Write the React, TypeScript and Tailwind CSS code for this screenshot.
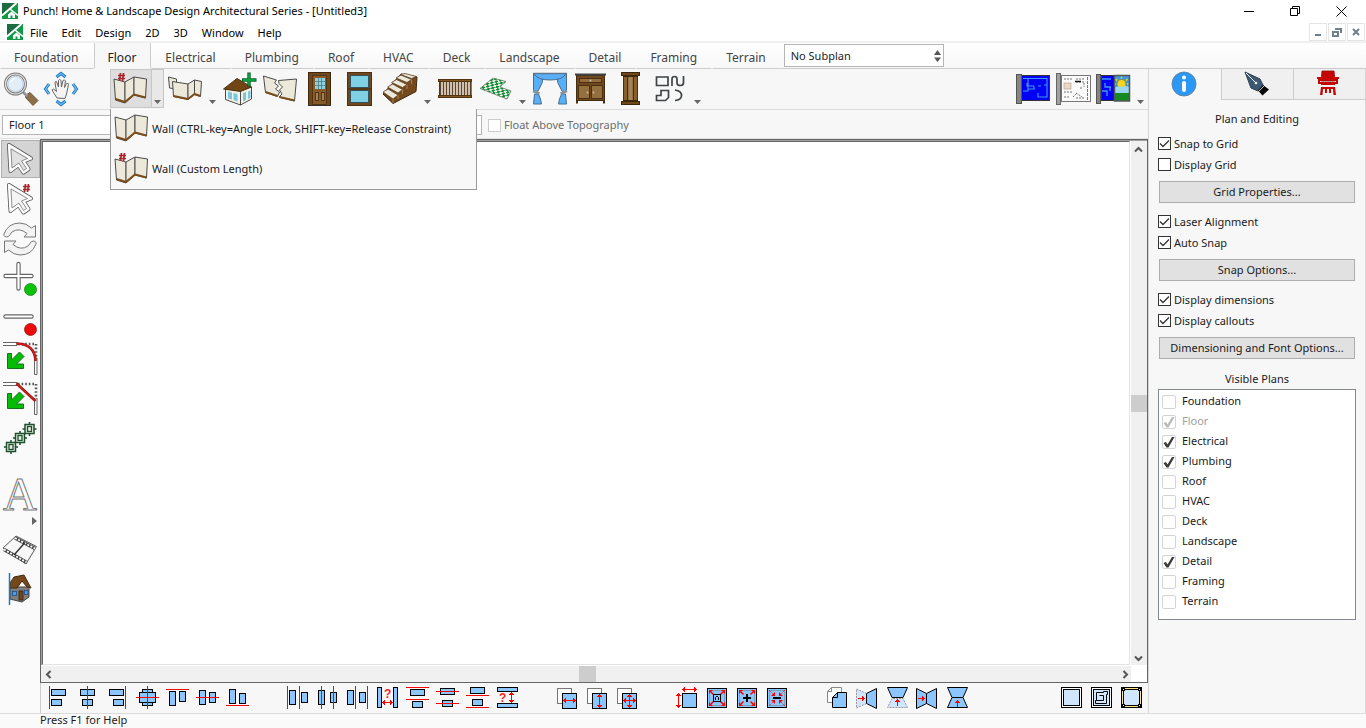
import React, { useState } from "react";
import clsx from "clsx";

const TABS = [
  "Foundation",
  "Floor",
  "Electrical",
  "Plumbing",
  "Roof",
  "HVAC",
  "Deck",
  "Landscape",
  "Detail",
  "Framing",
  "Terrain",
];

const MENUS = ["File", "Edit", "Design", "2D", "3D", "Window", "Help"];

const CREAM = "#ece9da";
const INK = "#4a4a4a";
const WOOD = "#7a4d1c";
const BLUE = "#8cc6ff";

/* ---------- small drawing helpers ---------- */

const Svg = ({ size = 40, children }: { size?: number; children: React.ReactNode }) => (
  <svg width={size} height={size} viewBox={`0 0 ${size} ${size}`} aria-hidden="true" className="block shrink-0 overflow-visible">
    {children}
  </svg>
);

const Logo = () => (
  <svg width="16" height="16" viewBox="0 0 16 16" aria-hidden="true" className="block shrink-0">
    <rect width="16" height="16" fill="#0f9a48" />
    <path d="M0 0H14L0 11Z" fill="#1d6b40" />
    <path d="M0 12.500L14.500 0" stroke="#fff" strokeWidth="2" />
    <path d="M8 6L16 12.500" stroke="#fff" strokeWidth="1.600" />
    <path d="M6 15V11.500L9.500 8.500L13 11.500V15H10.500V12.500H8.500V15Z" fill="#fff" />
  </svg>
);

const Hash = ({ x, y }: { x: number; y: number }) => (
  <path
    d={`M${x + 2.5} ${y}L${x + 1.5} ${y + 8}M${x + 5.5} ${y}L${x + 4.5} ${y + 8}M${x} ${y + 2.5}H${x + 7}M${x} ${y + 5.5}H${x + 7}`}
    stroke="#a8262b"
    strokeWidth="1.700"
    fill="none"
  />
);

const WallShape = () => (
  <g stroke={INK} strokeWidth="1" strokeLinejoin="round">
    <path d="M4 10L15 13V34L5.500 31Z" fill={CREAM} />
    <path d="M15 13L24 8V26L15 34Z" fill={CREAM} />
    <path d="M24 8L36.500 10L35.500 29L24 26Z" fill={CREAM} />
    <path d="M5.500 30L15 33L24 25.500L35.500 28.500" stroke={WOOD} strokeWidth="2" fill="none" />
  </g>
);

const WallIcon = ({ hash = false }: { hash?: boolean }) => (
  <Svg>
    <g transform={hash ? undefined : "translate(0 -2)"}>
      <WallShape />
    </g>
    {hash && <Hash x={8} y={4} />}
  </Svg>
);

/* ---------- top toolbar icons ---------- */

const ZoomIcon = () => (
  <Svg>
    <path d="M25 26L29 23.500L37 31.500L32 36.500L24.500 28.500Z" fill="#8d6f4c" stroke="#6b5235" />
    <path d="M22 23L26 27" stroke="#999" strokeWidth="3" />
    <circle cx="14.500" cy="15" r="10" fill="#f0f6fb" stroke="#777" strokeWidth="3" />
    <circle cx="14.500" cy="15" r="10" fill="none" stroke="#e4e4e4" strokeWidth="1.200" />
    <circle cx="14.500" cy="15" r="7.500" fill="#e2eff8" stroke="#a9c9df" strokeWidth=".8" />
    <path d="M9 14Q10 9 15 9Q11 12 9 14Z" fill="#fff" />
  </Svg>
);

const PanIcon = () => (
  <Svg>
    <path d="M15.500 8L20 4.500L24.500 8M15.500 32L20 35.500L24.500 32M8 15L4.500 20L8 25M32 15L35.500 20L32 25" stroke="#1c6fb8" strokeWidth="3" fill="none" />
    <path d="M15.500 8L20 4.500L24.500 8M15.500 32L20 35.500L24.500 32M8 15L4.500 20L8 25M32 15L35.500 20L32 25" stroke="#61b8f4" strokeWidth="1.400" fill="none" />
    <path
      d="M16 29L11.500 22Q10.500 20 12.500 20L15.500 22.500L14 14Q14 12 15.500 12.500L17.500 18L17.500 11.500Q18.500 9.500 20 11.500L20.500 18L22 11.500Q23.500 10 24.500 12L23.500 18.500L25.500 14.500Q27.500 13.500 27.500 15.500L25.500 25L24 29.500Z"
      fill="#f4f4f4"
      stroke="#666"
    />
  </Svg>
);

const WallStripIcon = () => (
  <Svg>
    <g stroke={INK} strokeLinejoin="round" fill={CREAM}>
      <path d="M3.500 8L11.500 10V20L4.500 19Z" />
      <path d="M7.500 12.500L23 15V30.500L8.500 27.500Z" />
      <path d="M23 15L29.500 11V25.500L23 30.500Z" />
      <path d="M29.500 11L36.500 12.500L35.500 27.500L29.500 25.500Z" />
      <path d="M8.500 27L23 30L29.500 25L35.500 27" stroke={WOOD} strokeWidth="2" fill="none" />
    </g>
  </Svg>
);

const AddHouseIcon = () => (
  <Svg>
    <path d="M5.500 20V30.500L20.500 36L31.500 30V18L20 21Z" fill="#f3f1e2" stroke={INK} />
    <path d="M20.500 22V36" stroke={INK} />
    <path d="M8 22.500L12 23.500V30.500L8 29.500ZM13.500 24L17.500 25V32.500L13.500 31ZM23 24L26 23V31L23 32.500ZM28 22.500L30.500 21.500V29L28 30Z" fill="#77c7e4" />
    <path d="M3.500 20L17 9.500L31.500 18L20.500 22.500Z" fill="#714514" stroke="#4b3115" />
    <path d="M29 3.500V17.500M22 11H36.500" stroke="#0b5d2b" strokeWidth="3.400" />
    <path d="M29 4.500V16.500M23 11H35.500" stroke="#0ca03f" strokeWidth="1.800" />
  </Svg>
);

const BreakWallIcon = () => (
  <Svg>
    <g fill={CREAM} stroke={INK} strokeLinejoin="round">
      <path d="M3.500 7L16.500 11L14.500 14L18.500 17L15.500 20L19.500 23L17.500 27.500L5.500 23.500Z" />
      <path d="M18.500 11.500L36.500 10L34.500 32L19 28L22 25L19.500 21L22.500 18L19 14.500Z" />
    </g>
    <path d="M5.500 23L17.500 27M19.500 28L34.500 31.500" stroke={WOOD} strokeWidth="2" />
  </Svg>
);

const DoorIcon = () => (
  <Svg>
    <rect x="8.500" y="3.500" width="22" height="33" fill="#70461b" stroke="#3f270c" />
    <rect x="12.500" y="6.500" width="14" height="29" fill="#875a2a" stroke="#543411" />
    <rect x="15" y="9" width="10" height="11" fill="#8bd3e2" />
    <path d="M18.500 9V20M21.500 9V20M15 12.500H25M15 16.500H25" stroke="#4c6e73" strokeWidth=".7" />
    <rect x="15.500" y="23.500" width="3" height="8" fill="#a98356" stroke="#533614" />
    <rect x="21.500" y="23.500" width="3" height="8" fill="#a98356" stroke="#533614" />
    <path d="M8 36.500H31" stroke="#333" />
  </Svg>
);

const WindowIcon = () => (
  <Svg>
    <rect x="7.500" y="3.500" width="24" height="33" fill="#70461b" stroke="#4f310d" />
    <rect x="10.500" y="6.500" width="18" height="12" fill="#80d0e5" stroke="#31545d" />
    <rect x="10.500" y="21.500" width="18" height="12" fill="#80d0e5" stroke="#31545d" />
    <path d="M8 20H31" stroke="#3f260a" />
  </Svg>
);

const StairsIcon = () => (
  <Svg>
    <path d="M3 25L13 34.500L36 22.500L37 8L21 5Z" fill="#75491b" stroke="#3d2812" />
    <g fill={CREAM} stroke="#594126" strokeWidth=".8">
      <path d="M3 23L8 20L18 26L13 30Z" />
      <path d="M7.500 18L12.500 15L22.500 20.500L18 24Z" />
      <path d="M11.500 13.500L16.500 10.500L27 15.500L22.500 18.500Z" />
      <path d="M16 9L21 6L31.500 10.500L27 13.500Z" />
      <path d="M20.500 5.500L25 4.500L36.500 7.500L31.500 9.500Z" />
    </g>
    <path d="M13 30V34M18 26V30M22.500 20.500V25M27 15.500V20M31.500 10.500V15" stroke="#a98157" />
  </Svg>
);

const RailingIcon = () => (
  <Svg>
    <path d="M5.500 12V27M8.500 12V27M11.500 12V27M14.500 12V27M17.500 12V27M20.500 12V27M23.500 12V27M26.500 12V27M29.500 12V27M32.500 12V27M35.500 12V27" stroke="#654420" strokeWidth="1.600" />
    <rect x="3.500" y="10.500" width="33" height="2" fill="#855522" stroke="#50330f" />
    <rect x="3.500" y="26.500" width="33" height="2" fill="#855522" stroke="#50330f" />
    <path d="M4.500 13V26M36 13V26" stroke="#50330f" />
  </Svg>
);

const TilesIcon = () => (
  <Svg>
    <defs>
      <pattern id="tiles" width="5" height="5" patternUnits="userSpaceOnUse" patternTransform="matrix(1 .3 -.8 .75 0 0)">
        <rect width="5" height="5" fill="#f5f5f0" />
        <rect width="2.600" height="2.600" fill="#0c8c32" />
        <rect x="2.500" y="2.500" width="2.600" height="2.600" fill="#0c8c32" />
      </pattern>
    </defs>
    <path d="M5 19.500L18 9L31 12.500L25 18L36 22L32 30Z" fill="url(#tiles)" stroke="#5b7a60" strokeWidth=".8" />
  </Svg>
);

const CurtainIcon = () => (
  <Svg>
    <g fill="#58b0fb" stroke="#4d6c86">
      <path d="M3.500 4.500H14Q13 15 8 22Q5 24 3.500 21Z" />
      <path d="M36.500 4.500H26Q27 15 32 22Q35 24 36.500 21Z" />
      <path d="M4.500 25H8.500Q11 30 11.500 35H3.500Z" />
      <path d="M35.500 25H31.500Q29 30 28.500 35H36.500Z" />
      <path d="M4 4.500H36Q33 11 20 11Q7 11 4 4.500Z" />
    </g>
    <path d="M3 22L9.500 24.500M37 22L30.500 24.500" stroke="#86929b" strokeWidth="2.500" />
    <path d="M3 4.500H37" stroke="#647788" strokeWidth="1.500" />
  </Svg>
);

const CabinetIcon = () => (
  <Svg>
    <rect x="6.500" y="6.500" width="28" height="25" fill="#70461d" stroke="#442c10" />
    <path d="M5 5.500H36" stroke="#3f4444" strokeWidth="2" />
    <rect x="9.500" y="9.500" width="22" height="4" fill="#936c3d" stroke="#4b2f11" />
    <rect x="8.500" y="16.500" width="11" height="13" fill="#94703f" stroke="#4b2f11" />
    <rect x="21.500" y="16.500" width="11" height="13" fill="#94703f" stroke="#4b2f11" />
    <path d="M7 31V34.500M34 31V34.500" stroke="#4b2f11" strokeWidth="2" />
    <circle cx="17.500" cy="23.500" r="1" fill="#c9c3b4" />
    <circle cx="23.500" cy="23.500" r="1" fill="#c9c3b4" />
    <circle cx="20.500" cy="11.500" r="1" fill="#c9c3b4" />
  </Svg>
);

const ColumnIcon = () => (
  <Svg>
    <rect x="13.500" y="6.500" width="14" height="27" fill="#86602f" stroke="#4a2e10" />
    <path d="M17.500 7V33M23.500 7V33" stroke="#4a2e10" />
    <path d="M20.500 7V33" stroke="#a68257" strokeWidth="4" />
    <rect x="11.500" y="3.500" width="18" height="3" fill="#70461b" stroke="#3c260d" />
    <rect x="11.500" y="32.500" width="18" height="3" fill="#70461b" stroke="#3c260d" />
    <path d="M13 7.500H28M13 31.500H28" stroke="#3c260d" />
  </Svg>
);

const ShapesIcon = () => (
  <Svg>
    <path
      d="M6.500 8H18V16.500H6.500ZM22 17V10Q22 7.500 24.500 7.500Q27 7.500 27 10V14Q27 16.500 30.500 16.500Q33.500 16.500 33.500 13.500V7M11 21.500H18.500V28.500L15.500 31.500H6.500V26.500H11ZM25 21Q32 22 31.500 27Q31 31 25 31.500"
      fill="none"
      stroke="#3f4446"
      strokeWidth="1.700"
    />
  </Svg>
);

const BlueprintIcon = () => (
  <Svg>
    <rect x="8.500" y="6.500" width="28" height="25" fill="#0000f5" stroke="#333" />
    <path d="M10 9.500H34V28H25V24M14 14V17H21M15 10V22H10M21 20V17M25 17H28M31 16H34M15 20H22" stroke="#4397f3" strokeWidth="1.100" fill="none" />
    <rect x="3.500" y="5.500" width="5" height="29" fill="#858585" stroke="#555" />
  </Svg>
);

const SheetIcon = () => (
  <Svg>
    <rect x="8.500" y="6.500" width="29" height="26" fill="#fafafa" stroke="#777" />
    <path d="M11 10H19M23 10H31M23 13H31V18M28 18V21M11 23H20M11 28H17M23 24L29 28M20 28L24 24M23 29H31" stroke="#777" fill="none" strokeDasharray="2 1" />
    <path d="M22 12.500H28" stroke="#111" strokeWidth="1.500" />
    <rect x="11" y="14" width="7" height="6" fill="#ead9c6" stroke="#ad9b86" strokeWidth=".6" />
    <path d="M34.500 8V31" stroke="#777" strokeDasharray="3 1" />
    <rect x="3.500" y="4.500" width="4" height="31" fill="#a1a1a1" stroke="#666" />
  </Svg>
);

const SplitIcon = () => (
  <Svg>
    <rect x="8.500" y="6.500" width="13" height="25" fill="#0000f5" stroke="#333" />
    <path d="M9 10H18M12 14V18H18M9 22H14V27M17 18V22" stroke="#4397f3" strokeWidth="1.300" fill="none" />
    <rect x="21" y="7" width="15" height="12" fill="#3d9be0" />
    <circle cx="28.500" cy="15" r="4.500" fill="#f4d51c" stroke="#8b7a14" strokeWidth=".7" />
    <path d="M28.500 9.500V7.500M24 11.500L22.500 10M33 11.500L34.500 10M23 15H22M34 15H35.500" stroke="#f4d51c" strokeWidth="1.500" />
    <path d="M21 19Q25 16 29 18Q33 16 36 18V24H21Z" fill="#9ad6ed" />
    <rect x="21" y="24" width="15" height="8" fill="#138a22" />
    <rect x="21.500" y="6.500" width="15" height="25.500" fill="none" stroke="#555" strokeWidth="1.500" />
    <rect x="3.500" y="5.500" width="4" height="29" fill="#858585" stroke="#555" />
  </Svg>
);

/* ---------- left toolbar icons ---------- */

const SelectIcon = ({ hash = false }: { hash?: boolean }) => {
  const d = "M9 6L31 19.500L23.500 22.500L28.500 30L23.500 33.500L18.500 26L10.500 32Z";
  return (
    <Svg>
      <path d={d} fill="#f1f1f1" stroke="#555" strokeWidth="4" strokeLinejoin="round" />
      <path d={d} fill={hash ? "#f4f4f4" : "#e2e2e2"} stroke="#fff" strokeWidth="2.400" strokeLinejoin="round" />
      <path d="M11 10L27.500 19.500L21.500 22L26.500 29.500L23.500 31.500L18.800 24L12 29Z" fill="none" stroke="#777" strokeWidth=".8" />
      {hash && <Hash x={23} y={5} />}
    </Svg>
  );
};

const RotateIcon = () => (
  <Svg>
    <g fill="#f3f3f3" stroke="#777" strokeWidth="1" strokeLinejoin="round">
      <path d="M4 15Q8 4 20 4Q26 4 31.500 9L35.500 6.500V18H24L27 14.500Q19 8 12 13L8.500 17.500Q3.500 19 4 15Z" />
      <path d="M36 25Q32 36 20 36Q14 36 8.500 31L4.500 33.500V22H16L13 25.500Q21 32 28 27L31.500 22.500Q36.500 21 36 25Z" />
    </g>
  </Svg>
);

const PlusIcon = () => (
  <Svg>
    <path d="M18.500 5V29.500M5.500 17H31.500" stroke="#666" strokeWidth="4.400" strokeLinecap="round" />
    <path d="M18.500 5V29.500M5.500 17H31.500" stroke="#fff" strokeWidth="2.200" strokeLinecap="round" />
    <circle cx="30.500" cy="30.500" r="6" fill="#08c408" stroke="#247a24" strokeWidth=".8" />
  </Svg>
);

const MinusIcon = () => (
  <Svg>
    <path d="M5.500 17.500H31.500" stroke="#666" strokeWidth="4.400" strokeLinecap="round" />
    <path d="M5.500 17.500H31.500" stroke="#fff" strokeWidth="2.200" strokeLinecap="round" />
    <circle cx="30.500" cy="30.500" r="6" fill="#f00808" stroke="#8a2222" strokeWidth=".8" />
  </Svg>
);

const CornerIcon = ({ round = false }: { round?: boolean }) => (
  <Svg>
    <path d="M3 3.500H17V6.500H3M34.500 19V35.500H37V19" fill="#fff" stroke="#555" strokeWidth=".9" />
    <path d="M18 5H36V20" stroke="#555" strokeWidth="2.600" strokeDasharray="1.600 2" fill="none" />
    <path d={round ? "M16.500 4.500Q35 5 35.500 22" : "M16.500 4.500L35.500 22"} stroke="#801818" strokeWidth="2.600" fill="none" />
    <path d={round ? "M16.500 4.500Q35 5 35.500 22" : "M16.500 4.500L35.500 22"} stroke="#e01818" strokeWidth="1.400" fill="none" />
    <path d="M7.500 14.500H11.500V21L19.500 13L24 17.500L16.500 25H23.500V29.500H7.500Z" fill="#04bd04" stroke="#1c6e1c" />
  </Svg>
);

const ChainIcon = () => (
  <Svg>
    {[
      [11, 28],
      [20, 19],
      [29.5, 10],
    ].map(([x, y]) => (
      <g key={x} stroke="#1f4f2c" fill="#e4efe4">
        <path d={`M${x} ${y - 7}V${y + 7}M${x - 7} ${y}H${x + 7}`} strokeWidth="1.500" />
        <rect x={x - 4.5} y={y - 4.5} width="9" height="9" strokeWidth="1.500" />
        <rect x={x - 2} y={y - 2.5} width="4" height="5" strokeWidth="1.300" />
      </g>
    ))}
  </Svg>
);

const TextIcon = () => (
  <Svg>
    <text x="20" y="35" textAnchor="middle" fontSize="47" fontFamily="Liberation Serif, serif" fill="#fff" stroke="#777" strokeWidth="1">
      A
    </text>
  </Svg>
);

const FilmIcon = () => (
  <Svg>
    <path d="M3 18L16 6L36.500 16.500L26 34Z" fill="#f7f7f7" stroke="#555" />
    <path d="M4 19.500L26 32M15 8L35 18.500" stroke="#444" strokeWidth="3.400" />
    <path d="M4 19.500L26 32M15 8L35 18.500" stroke="#fff" strokeWidth="1.800" strokeDasharray="2 1.500" />
    <path d="M14 25L25 12.500" stroke="#333" strokeWidth="1.400" />
  </Svg>
);

const ElevationIcon = () => (
  <Svg>
    <path d="M10 17H29V27L22 32L10 29Z" fill="#7f7f7f" stroke="#444" />
    <path d="M10 18V13L14 7L24 5L31 18L27 17L22 11L17 18Z" fill="#74481a" stroke="#442b10" />
    <rect x="12.500" y="21.500" width="4" height="4" fill="#4a9de8" stroke="#1d4f80" strokeWidth=".8" />
    <rect x="24.500" y="20.500" width="3.500" height="4" fill="#4a9de8" stroke="#1d4f80" strokeWidth=".8" />
    <rect x="19" y="21" width="4" height="9" fill="#70461b" stroke="#3d250a" strokeWidth=".8" />
    <path d="M9.500 3V35" stroke="#1f78c8" strokeWidth="1.500" />
  </Svg>
);

/* ---------- align bar icons, drawn on a 30px grid ---------- */

const Box = ({ x, y, x2, y2, fill = BLUE, stroke = "#000" }: { x: number; y: number; x2: number; y2: number; fill?: string; stroke?: string }) => (
  <rect x={x + 0.5} y={y + 0.5} width={x2 - x - 1} height={y2 - y - 1} fill={fill} stroke={stroke} />
);
const V = ({ x }: { x: number }) => <path d={`M${x + 0.5} 3V26`} stroke="#f00" />;
const H = ({ y }: { y: number }) => <path d={`M4 ${y + 0.5}H27`} stroke="#f00" />;

const HArrow = ({ y, a, b }: { y: number; a: number; b: number }) => (
  <path
    d={`M${a} ${y + 0.5}H${b}M${a + 1.5} ${y - 1}V${y + 2}M${a + 2.5} ${y - 2}V${y + 3}M${b - 1.5} ${y - 1}V${y + 2}M${b - 2.5} ${y - 2}V${y + 3}`}
    stroke="#f00"
  />
);
const VArrow = ({ x, a, b }: { x: number; a: number; b: number }) => (
  <path
    d={`M${x + 0.5} ${a}V${b}M${x - 1} ${a + 1.5}H${x + 2}M${x - 2} ${a + 2.5}H${x + 3}M${x - 1} ${b - 1.5}H${x + 2}M${x - 2} ${b - 2.5}H${x + 3}`}
    stroke="#f00"
  />
);

const Query = ({ x, y }: { x: number; y: number }) => (
  <text x={x} y={y} fontSize="12" fontWeight="700" fontFamily="Liberation Sans, sans-serif" fill="#f22">
    ?
  </text>
);

const Stack = ({ children }: { children?: React.ReactNode }) => (
  <>
    <Box x={5} y={5} x2={20} y2={21} fill="#fff" stroke="#777" />
    <Box x={10} y={10} x2={25} y2={26} />
    {children}
  </>
);

const Fit = ({ inward = false, children }: { inward?: boolean; children?: React.ReactNode }) => (
  <>
    <Box x={5} y={5} x2={25} y2={25} />
    <rect x="7.500" y="7.500" width="15" height="15" fill="none" stroke="#777" strokeDasharray="1 1" />
    {inward ? (
      <>
        <path d="M7 7L11 11M23 7L19 11M7 23L11 19M23 23L19 19" stroke="#f00" strokeDasharray="1 1" />
        <path d="M13 9V13H9ZM17 9V13H21ZM13 21V17H9ZM17 21V17H21Z" fill="#f00" />
      </>
    ) : (
      <>
        <path d="M7 7H11L7 11ZM23 7H19L23 11ZM7 23H11L7 19ZM23 23H19L23 19Z" fill="#f00" />
        <path d="M9 9L11.500 11.500M21 9L18.500 11.500M9 21L11.500 18.500M21 21L18.500 18.500" stroke="#f00" strokeWidth="1.500" />
      </>
    )}
    {children}
  </>
);

const Framed = ({ edge = "#fff", children }: { edge?: string; children?: React.ReactNode }) => (
  <>
    <Box x={5} y={4} x2={26} y2={25} fill={edge} />
    <Box x={7} y={6} x2={24} y2={23} fill="#d0e6ff" />
    {children}
  </>
);

type Tool = [string, React.ReactNode];

const ALIGN_GROUPS: Tool[][] = [
  [
    ["Align left", <><Box x={9} y={6} x2={24} y2={13} /><Box x={9} y={16} x2={20} y2={23} /><V x={7} /></>],
    ["Align center", <><Box x={8} y={6} x2={23} y2={13} /><Box x={10} y={16} x2={21} y2={23} /><V x={15} /></>],
    ["Align right", <><Box x={7} y={6} x2={22} y2={13} /><Box x={11} y={16} x2={22} y2={23} /><V x={23} /></>],
    ["Align centers", <><Box x={10} y={6} x2={21} y2={23} /><Box x={7} y={9} x2={24} y2={20} /><V x={15} /><H y={14} /></>],
    ["Align top", <><Box x={7} y={8} x2={14} y2={23} /><Box x={17} y={8} x2={24} y2={19} /><H y={6} /></>],
    ["Align middle", <><Box x={7} y={7} x2={14} y2={22} /><Box x={17} y={9} x2={24} y2={20} /><H y={14} /></>],
    ["Align bottom", <><Box x={7} y={6} x2={14} y2={21} /><Box x={17} y={10} x2={24} y2={21} /><H y={22} /></>],
  ],
  [
    ["Distribute left edges", <><Box x={7} y={7} x2={14} y2={22} /><Box x={19} y={9} x2={26} y2={20} /><V x={5} /><V x={17} /></>],
    ["Distribute centers", <><Box x={6} y={7} x2={13} y2={22} /><Box x={18} y={9} x2={25} y2={20} /><V x={9} /><V x={21} /></>],
    ["Distribute right edges", <><Box x={5} y={7} x2={12} y2={22} /><Box x={17} y={9} x2={24} y2={20} /><V x={13} /><V x={25} /></>],
    ["Horizontal spacing", <><Box x={5} y={4} x2={10} y2={25} /><Box x={21} y={4} x2={26} y2={25} /><Query x={12} y={15} /><HArrow y={19} a={10} b={21} /></>],
    ["Distribute top edges", <><Box x={8} y={6} x2={23} y2={13} /><Box x={10} y={18} x2={21} y2={25} /><H y={4} /><H y={16} /></>],
    ["Distribute middles", <><Box x={8} y={5} x2={23} y2={12} /><Box x={10} y={17} x2={21} y2={24} /><H y={8} /><H y={20} /></>],
    ["Distribute bottom edges", <><Box x={8} y={4} x2={23} y2={11} /><Box x={10} y={16} x2={21} y2={23} /><H y={12} /><H y={24} /></>],
    ["Vertical spacing", <><Box x={5} y={4} x2={26} y2={9} /><Box x={5} y={20} x2={26} y2={25} /><Query x={7} y={19} /><VArrow x={19} a={9} b={20} /></>],
  ],
  [
    ["Same width", <Stack><HArrow y={17} a={11} b={24} /></Stack>],
    ["Same height", <Stack><VArrow x={17} a={11} b={25} /></Stack>],
    ["Same size", <Stack><HArrow y={17} a={11} b={24} /><VArrow x={17} a={11} b={25} /></Stack>],
  ],
  [
    ["Resize", <><Box x={10} y={10} x2={25} y2={25} /><HArrow y={6} a={10} b={25} /><VArrow x={6} a={10} b={25} /></>],
    ["Scale", <Fit><Box x={11} y={11} x2={19} y2={19} /><path d="M13.500 17V14.500L15 13L16.500 14.500V17" stroke="#000" fill="none" /></Fit>],
    ["Enlarge", <Fit><path d="M15 11V19M11 15H19" stroke="#000" strokeWidth="2" /></Fit>],
    ["Reduce", <Fit inward><path d="M11 15H19" stroke="#000" strokeWidth="2" /></Fit>],
  ],
  [
    ["Duplicate", <><path d="M9.500 4.500H19.500V19.500H5.500V8.500ZM9.500 4.500V8.500H5.500" fill="#fff" stroke="#888" /><path d="M15.500 9.500H24.500V24.500H10.500V14.500ZM15.500 9.500V14.500H10.500" fill={BLUE} stroke="#000" /></>],
    ["Mirror copy horizontal", <><path d="M4.500 6L14.500 10.500V20.500L4.500 25Z" fill="#d0e6ff" stroke="#999" strokeDasharray="2 1" /><path d="M14.500 10.500L24.500 5.500V25.500L14.500 20.500Z" fill={BLUE} stroke="#000" /><path d="M6 15.500H13M10.500 13V18M11.500 14V17" stroke="#f00" /></>],
    ["Mirror copy vertical", <><path d="M10 15.500L5.500 24.500H25.500L21 15.500Z" fill="#d0e6ff" stroke="#999" strokeDasharray="2 1" /><path d="M5.500 4.500H25.500L21 14.500H10Z" fill={BLUE} stroke="#000" /><path d="M15.500 23V16M13 18.500H18M14 17.500H17" stroke="#f00" /></>],
    ["Mirror horizontal", <><path d="M4.500 5.500L14.500 10.500L24.500 5.500V25.500L14.500 20.500L4.500 25.500ZM14.500 10.500V20.500" fill={BLUE} stroke="#000" /><path d="M6 15.500H13M10.500 13V18M11.500 14V17" stroke="#f00" /></>],
    ["Mirror vertical", <><path d="M5.500 4.500H25.500L21 14.500L25.500 24.500H5.500L10 14.500ZM10 14.500H21" fill={BLUE} stroke="#000" /><path d="M15.500 24V17M13 19.500H18M14 18.500H17" stroke="#f00" /></>],
  ],
];

const VIEW_TOOLS: Tool[] = [
  ["Plain", <Framed />],
  ["Nested", <Framed><path d="M10.500 9.500H17.500V8.500H21.500V11.500H20.500V20.500H9.500V17.500H10.500ZM13.500 12.500H17.500V17.500H10.500" fill="none" stroke="#000" /></Framed>],
  ["Handles", <Framed edge="#ffe680"><Box x={6} y={5} x2={9} y2={8} fill="#fff" /><Box x={22} y={5} x2={25} y2={8} fill="#fff" /><Box x={6} y={21} x2={9} y2={24} fill="#fff" /><Box x={22} y={21} x2={25} y2={24} fill="#fff" /></Framed>],
];

const AlignButton = ({ tool }: { tool: Tool }) => (
  <button aria-label={tool[0]} className="size-[30px]">
    <Svg size={30}>{tool[1]}</Svg>
  </button>
);

/* ---------- toolbars ---------- */

const ToolButton = ({ label, children }: { label: string; children: React.ReactNode }) => (
  <button aria-label={label} className="size-10 shrink-0">
    {children}
  </button>
);

const DropArrow = () => (
  <svg width="7" height="4" viewBox="0 0 7 4" aria-hidden="true">
    <path d="M0 0H7L3.500 4Z" fill="#666" />
  </svg>
);

const DropButton = ({ label }: { label: string }) => (
  <button aria-label={label} className="flex h-10 w-[15px] shrink-0 items-end justify-center pb-[5px]">
    <DropArrow />
  </button>
);

const WallMenu = () => (
  <div role="menu" className="absolute top-full left-0 z-10 flex w-[367px] flex-col border border-t-0 border-[#999] bg-[#f8f8f8]">
    <button role="menuitem" className="flex h-10 items-center gap-px text-left whitespace-nowrap">
      <WallIcon />
      Wall (CTRL-key=Angle Lock, SHIFT-key=Release Constraint)
    </button>
    <button role="menuitem" className="flex h-10 items-center gap-px text-left whitespace-nowrap">
      <WallIcon hash />
      Wall (Custom Length)
    </button>
  </div>
);

const Toolbar = () => (
  <div className="flex h-[41px] border-b border-[#dcdcdc] pl-px">
    <ToolButton label="Zoom"><ZoomIcon /></ToolButton>
    <ToolButton label="Pan"><PanIcon /></ToolButton>
    <div className="relative ml-[29px] flex w-[55px]">
      <button aria-label="Wall" className="h-[39px] w-[42px] border border-[#c6c6c6] bg-[#dedede]">
        <span className="-mt-px -ml-px block"><WallIcon hash /></span>
      </button>
      <button aria-label="Wall options" className="flex h-[39px] w-3 items-end justify-center border border-l-0 border-[#c6c6c6] bg-[#e8e8e8] pb-[3px]">
        <DropArrow />
      </button>
      <WallMenu />
    </div>
    <ToolButton label="Wall run"><WallStripIcon /></ToolButton>
    <DropButton label="Wall run options" />
    <ToolButton label="Add room"><AddHouseIcon /></ToolButton>
    <ToolButton label="Break wall"><BreakWallIcon /></ToolButton>
    <ToolButton label="Door"><DoorIcon /></ToolButton>
    <ToolButton label="Window"><WindowIcon /></ToolButton>
    <ToolButton label="Stairs"><StairsIcon /></ToolButton>
    <DropButton label="Stairs options" />
    <ToolButton label="Railing"><RailingIcon /></ToolButton>
    <ToolButton label="Floor covering"><TilesIcon /></ToolButton>
    <DropButton label="Floor covering options" />
    <ToolButton label="Curtains"><CurtainIcon /></ToolButton>
    <ToolButton label="Cabinet"><CabinetIcon /></ToolButton>
    <ToolButton label="Column"><ColumnIcon /></ToolButton>
    <ToolButton label="Shapes"><ShapesIcon /></ToolButton>
    <DropButton label="Shapes options" />
    <div className="ml-auto flex">
      <ToolButton label="Blueprint view"><BlueprintIcon /></ToolButton>
      <ToolButton label="Sheet view"><SheetIcon /></ToolButton>
      <ToolButton label="Split view"><SplitIcon /></ToolButton>
      <DropButton label="View options" />
    </div>
  </div>
);

const SideTools = () => (
  <div className="flex w-10 shrink-0 flex-col bg-[#fafafa]">
    <button aria-label="Select" className="flex size-10 items-center justify-end">
      <span className="flex h-[38px] w-[39px] items-center justify-center border border-[#b0b0b0] bg-[#d4d4d4] pr-0.5">
        <SelectIcon />
      </span>
    </button>
    <ToolButton label="Select by number"><SelectIcon hash /></ToolButton>
    <ToolButton label="Rotate"><RotateIcon /></ToolButton>
    <ToolButton label="Add point"><PlusIcon /></ToolButton>
    <ToolButton label="Remove point"><MinusIcon /></ToolButton>
    <ToolButton label="Fillet"><CornerIcon round /></ToolButton>
    <ToolButton label="Chamfer"><CornerIcon /></ToolButton>
    <ToolButton label="Multiple copy"><ChainIcon /></ToolButton>
    <div className="mt-4 flex flex-col">
      <ToolButton label="Text"><TextIcon /></ToolButton>
      <button aria-label="More text tools" className="flex h-[15px] w-10 items-start justify-end pt-0.5 pr-[3px]">
        <svg width="5" height="8" viewBox="0 0 5 8" aria-hidden="true">
          <path d="M0 0L5 4L0 8Z" fill="#666" />
        </svg>
      </button>
      <ToolButton label="Animation"><FilmIcon /></ToolButton>
      <ToolButton label="Elevation"><ElevationIcon /></ToolButton>
    </div>
  </div>
);

const Chevron = ({ d }: { d: string }) => (
  <svg width="9" height="9" viewBox="0 0 9 9" aria-hidden="true">
    <path d={d} fill="none" stroke="#555" strokeWidth="2" />
  </svg>
);

const DrawingArea = () => (
  <div className="flex flex-1 flex-col border border-[#666] bg-white">
    <div className="flex flex-1 border-t border-l border-[#a0a0a0]">
      <div className="mr-px flex-1 border border-t-[#666] border-r-[#e3e3e3] border-b-[#e3e3e3] border-l-[#666] bg-white" />
      <div className="flex w-4 flex-col items-center justify-between bg-[#f0f0f0]">
        <button aria-label="Scroll up" className="flex size-4 items-center pl-[3px]"><Chevron d="M1 6.500L4.500 3L8 6.500" /></button>
        <div className="h-[17px] w-4 bg-[#cdcdcd]" />
        <button aria-label="Scroll down" className="flex size-4 items-end pb-0.5 pl-[3px]"><Chevron d="M1 2.500L4.500 6L8 2.500" /></button>
      </div>
    </div>
    <div className="mt-px mr-4 flex h-4 items-center justify-between bg-[#f0f0f0]">
      <button aria-label="Scroll left" className="flex w-3.5 justify-center"><Chevron d="M6.500 1L3 4.500L6.500 8" /></button>
      <div className="h-4 w-[17px] bg-[#cdcdcd]" />
      <button aria-label="Scroll right" className="flex w-3 justify-center"><Chevron d="M2.500 1L6 4.500L2.500 8" /></button>
    </div>
  </div>
);

const AlignBar = () => (
  <div className="flex h-[30px] border-l border-[#ccc] pr-0.5 pl-px">
    <div className="flex gap-[30px]">
      {ALIGN_GROUPS.map((group) => (
        <div key={group[0][0]} className="flex">
          {group.map((tool) => (
            <AlignButton key={tool[0]} tool={tool} />
          ))}
        </div>
      ))}
    </div>
    <div className="ml-auto flex">
      {VIEW_TOOLS.map((tool) => (
        <AlignButton key={tool[0]} tool={tool} />
      ))}
    </div>
  </div>
);

/* ---------- right panel ---------- */

const Check = ({ label, defaultChecked = false }: { label: string; defaultChecked?: boolean }) => (
  <label className="flex h-[21px] items-center gap-[3px]">
    <span className="grid">
      <input type="checkbox" defaultChecked={defaultChecked} className="peer col-start-1 row-start-1 size-[13px] appearance-none border border-[#333] bg-white" />
      <svg width="13" height="13" viewBox="0 0 13 13" aria-hidden="true" className="pointer-events-none invisible col-start-1 row-start-1 peer-checked:visible">
        <path d="M2 6.500L5 9.500L11 3.500" fill="none" stroke="#333" strokeWidth="1.300" />
      </svg>
    </span>
    {label}
  </label>
);

const PlanCheck = ({ label, checked, locked, onToggle }: { label: string; checked: boolean; locked: boolean; onToggle: () => void }) => (
  <label className={clsx("flex h-5 items-center gap-1.5", locked && "text-[#a0a0a0]")}>
    <span className="mt-0.5 grid">
      <input
        type="checkbox"
        checked={checked}
        disabled={locked}
        onChange={onToggle}
        className="peer col-start-1 row-start-1 size-3.5 appearance-none rounded-xs border border-[#d4d4d4] bg-white"
      />
      <svg width="14" height="14" viewBox="0 0 14 14" aria-hidden="true" className="pointer-events-none invisible col-start-1 row-start-1 peer-checked:visible">
        <path d="M1.500 8L4 7L5.500 9.500L10 2H12.500L6.500 12.500H4.500Z" fill={locked ? "#bbb" : "#3a3a3a"} />
      </svg>
    </span>
    {label}
  </label>
);

const PanelButton = ({ children }: { children: React.ReactNode }) => (
  <button className="mt-1.5 mb-2 h-[22px] w-full border border-[#adadad] bg-[#e1e1e1] whitespace-nowrap">{children}</button>
);

const SidePanel = () => {
  const [visible, setVisible] = useState<string[]>(["Floor", "Electrical", "Plumbing", "Detail"]);

  const toggle = (plan: string) => {
    setVisible((prev) => (prev.includes(plan) ? prev.filter((p) => p !== plan) : [...prev, plan]));
  };

  return (
    <aside className="w-[218px] shrink-0 border-x border-[#d5d5d5] bg-[#f7f7f7]">
      <div className="grid h-[31px] grid-cols-3">
        <button aria-label="Information" className="flex items-center justify-center pr-0.5 pb-0.5">
          <svg width="26" height="26" viewBox="0 0 26 26" aria-hidden="true">
            <circle cx="13" cy="13" r="12" fill="#2b98f5" stroke="#5c7890" strokeWidth=".8" />
            <circle cx="13" cy="6.500" r="2" fill="#fff" />
            <rect x="11" y="10" width="4" height="11" rx="2" fill="#fff" />
          </svg>
        </button>
        <button aria-label="Drawing" className="flex items-center justify-center border-b border-l border-[#ccc] bg-[#f0f0f0] pr-0.5">
          <svg width="26" height="26" viewBox="0 0 26 26" aria-hidden="true">
            <path d="M1 1L16 8L19.500 15L14 20L7 17Z" fill="#3c5872" stroke="#2d4052" />
            <path d="M2 2L11.500 11.500" stroke="#eee" />
            <circle cx="12" cy="12" r="1.300" fill="#eee" />
            <path d="M19 14L25 18.500L18.500 24.500L14 19.500Z" fill="#0a0a0a" />
            <path d="M20 15L15 20" stroke="#fff" strokeWidth=".8" />
          </svg>
        </button>
        <button aria-label="Furniture" className="flex items-center justify-center border-b border-l border-[#ccc] bg-[#f0f0f0] pr-1 pb-0.5">
          <svg width="24" height="26" viewBox="0 0 24 26" aria-hidden="true">
            <path d="M6 1H18L19 11H5Z" fill="#c60505" stroke="#8e0808" strokeWidth=".8" />
            <path d="M1 8H5V10H3V13H5M23 8H19V10H21V13H19" fill="none" stroke="#c60505" strokeWidth="2" />
            <path d="M5 12H19V15H5Z" fill="#c60505" />
            <path d="M5 17H19L20 25H17.500L17 19H15V23H13V19H11V23H9V19H7L6.500 25H4Z" fill="#c60505" />
          </svg>
        </button>
      </div>
      <div className="px-[9px] pt-[9px]">
        <h2 className="mb-1 h-5 text-center leading-5">Plan and Editing</h2>
        <Check label="Snap to Grid" defaultChecked />
        <Check label="Display Grid" />
        <div className="px-px">
          <PanelButton>Grid Properties...</PanelButton>
        </div>
        <Check label="Laser Alignment" defaultChecked />
        <Check label="Auto Snap" defaultChecked />
        <div className="px-px">
          <PanelButton>Snap Options...</PanelButton>
        </div>
        <Check label="Display dimensions" defaultChecked />
        <Check label="Display callouts" defaultChecked />
        <div className="px-px">
          <PanelButton>Dimensioning and Font Options...</PanelButton>
        </div>
        <h2 className="h-[22px] text-center leading-6">Visible Plans</h2>
        <div className="border border-[#828790] bg-white pt-px pb-2 pl-[3px]">
          {TABS.map((plan) => (
            <PlanCheck key={plan} label={plan} checked={visible.includes(plan)} locked={plan === "Floor"} onToggle={() => toggle(plan)} />
          ))}
        </div>
      </div>
    </aside>
  );
};

/* ---------- window chrome ---------- */

const TitleBar = () => (
  <header className="flex h-[22px] items-center bg-white pl-0.5">
    <Logo />
    <h1 className="ml-[5px] text-black">Punch! Home &amp; Landscape Design Architectural Series - [Untitled3]</h1>
    <div className="ml-auto flex pr-0.5">
      <button aria-label="Minimize" className="flex w-[46px] justify-center">
        <svg width="11" height="11" viewBox="0 0 11 11" aria-hidden="true"><path d="M0 5.500H10" stroke="#000" /></svg>
      </button>
      <button aria-label="Restore" className="flex w-[46px] justify-center">
        <svg width="11" height="11" viewBox="0 0 11 11" aria-hidden="true"><path d="M.5 2.500H7.500V9.500H.5ZM2.500 2.500V.5H9.500V7.500H7.500" fill="none" stroke="#000" /></svg>
      </button>
      <button aria-label="Close" className="flex w-[46px] justify-center">
        <svg width="11" height="11" viewBox="0 0 11 11" aria-hidden="true"><path d="M.5 .5L10.500 10.500M10.500 .5L.5 10.500" stroke="#000" /></svg>
      </button>
    </div>
  </header>
);

const MdiButton = ({ label, d }: { label: string; d: string }) => (
  <button aria-label={label} className="flex size-[18px] items-center justify-center border border-[#e5e5e5]">
    <svg width="10" height="10" viewBox="0 0 10 10" aria-hidden="true"><path d={d} fill="none" stroke="#6e7f8d" strokeWidth="2" /></svg>
  </button>
);

const MenuBar = () => (
  <nav className="flex h-[21px] items-center border-b-2 border-[#f0f0f0] bg-white pr-px pl-[7px] text-black">
    <Logo />
    <div className="ml-[7px] flex gap-3.5 pt-0.5">
      {MENUS.map((menu) => (
        <button key={menu}>{menu}</button>
      ))}
    </div>
    <div className="ml-auto flex gap-px">
      <MdiButton label="Minimize document" d="M2 8H8" />
      <MdiButton label="Restore document" d="M1 5H6V9H1ZM3 2H9V6" />
      <MdiButton label="Close document" d="M2 2L8 8M8 2L2 8" />
    </div>
  </nav>
);

const Spinner = () => (
  <svg width="7" height="12" viewBox="0 0 7 12" aria-hidden="true" className="pointer-events-none absolute right-[3px]">
    <path d="M0 5L3.500 0L7 5ZM0 7.500L3.500 12L7 7.500Z" fill="#555" />
  </svg>
);

const PlanTabs = ({ active, onSelect }: { active: string; onSelect: (tab: string) => void }) => (
  <div className="flex h-[26px] bg-gradient-to-b from-white to-[#f7f7f7]">
    <div className="flex text-[12px] text-[#444]">
      {TABS.map((tab) => (
        <button
          key={tab}
          onClick={() => onSelect(tab)}
          className={clsx(
            "border-b pt-1 pr-3.5 pl-[13px]",
            active === tab ? "border-x border-x-[#ccc] border-b-[#f7f7f7] bg-[#f7f7f7] text-[#222]" : "border-x border-x-transparent border-b-[#ccc]",
          )}
        >
          {tab}
        </button>
      ))}
    </div>
    <div className="flex flex-1 items-start border-b border-[#ccc] pt-px pl-[3px]">
      <div className="relative flex items-center">
        <select aria-label="Subplan" className="h-[23px] w-40 appearance-none border border-[#b5b5b5] bg-white pl-1.5 text-[#222]">
          <option>No Subplan</option>
        </select>
        <Spinner />
      </div>
    </div>
  </div>
);

const OptionsBar = () => (
  <div className="flex h-[29px] items-center gap-[6px] border-b border-[#e2e2e2] pt-0.5 pl-0.5">
    <select aria-label="Floor level" className="h-5 w-[480px] appearance-none border border-[#b5b5b5] bg-white pl-1.5 text-[#222]">
      <option>Floor 1</option>
    </select>
    <label className="flex items-center gap-[3px] text-[#6d6d6d]">
      <input type="checkbox" disabled className="size-[13px] appearance-none border border-[#ccc] bg-white" />
      Float Above Topography
    </label>
  </div>
);

export default function App() {
  const [tab, setTab] = useState("Floor");

  return (
    <div className="flex min-h-screen flex-col bg-[#f7f7f7] font-['Noto_Sans',sans-serif] text-[11px] leading-4 text-[#1a1a1a]">
      <TitleBar />
      <MenuBar />
      <PlanTabs active={tab} onSelect={setTab} />
      <main className="flex flex-1">
        <div className="flex min-w-0 flex-1 flex-col">
          <Toolbar />
          <OptionsBar />
          <div className="flex flex-1">
            <SideTools />
            <div className="flex min-w-0 flex-1 flex-col">
              <DrawingArea />
              <AlignBar />
            </div>
          </div>
        </div>
        <SidePanel />
      </main>
      <footer className="h-[15px] border-t border-[#dcdcdc] bg-[#fafafa] pl-10 leading-3">Press F1 for Help</footer>
    </div>
  );
}
